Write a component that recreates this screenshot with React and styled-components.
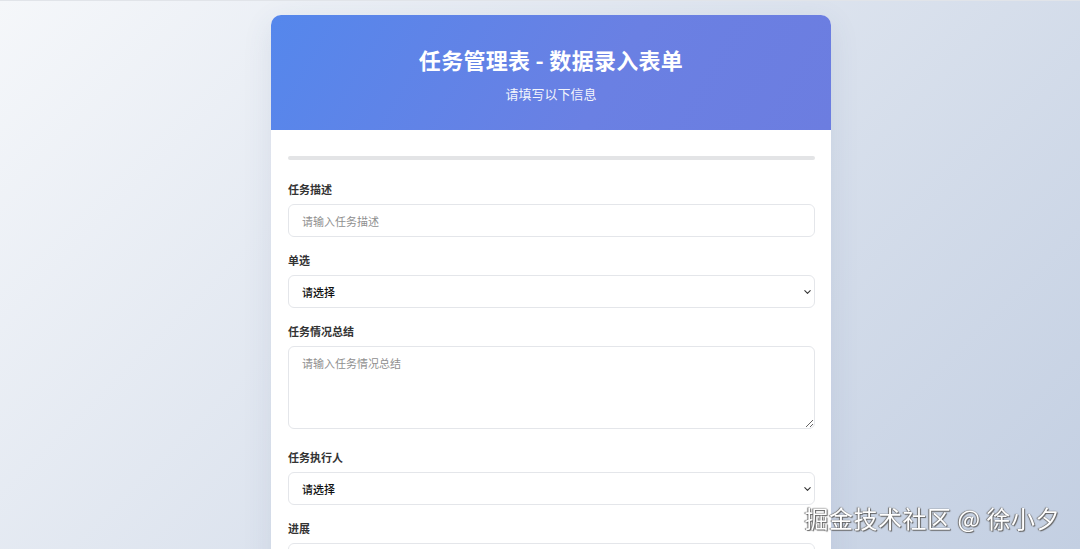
import React from "react";
import styled, { createGlobalStyle } from "styled-components";

const Global = createGlobalStyle`
  * { box-sizing: border-box; }
  html, body { margin: 0; padding: 0; }
  body {
    font-family: "Noto Sans CJK SC", "Noto Sans", sans-serif;
    background: linear-gradient(135deg, #f5f7fa 0%, #c3cfe2 100%);
    background-attachment: fixed;
    min-height: 100vh;
    border-top: 1px solid #e1e4e9;
  }
`;

const Page = styled.div`
  display: flex;
  justify-content: center;
  padding-top: 14px;
  padding-left: 22px;
`;

const Card = styled.div`
  width: 560px;
  background: #fff;
  border-radius: 10px;
  overflow: hidden;
  box-shadow: 0 8px 30px rgba(60, 80, 130, 0.10);
`;

const Header = styled.div`
  background: linear-gradient(120deg, #5587ec 0%, #6a80e3 60%, #6c7de0 100%);
  color: #fff;
  text-align: center;
  padding: 30px 20px 26px;
`;

const Title = styled.h1`
  margin: 0;
  font-size: 22px;
  line-height: 29px;
  font-weight: 700;
  letter-spacing: 0.3px;
`;

const Subtitle = styled.p`
  margin: 10px 0 0;
  font-size: 13px;
  line-height: 20px;
  opacity: 0.92;
`;

const Body = styled.div`
  padding: 26px 16px 24px 17px;
`;

const Progress = styled.div`
  height: 4px;
  border-radius: 2px;
  background: #e3e4e6;
  margin-bottom: 20px;
`;

const Group = styled.div`
  margin-bottom: 14px;
`;

const Label = styled.label`
  display: block;
  font-size: 11px;
  line-height: 18px;
  font-weight: 600;
  color: #333;
  margin-bottom: 6px;
`;

const Input = styled.input`
  display: block;
  width: 100%;
  height: 33px;
  border: 1px solid #e4e6ea;
  border-radius: 6px;
  padding: 0 13px;
  font-family: inherit;
  font-size: 11px;
  color: #333;
  background: #fff;
  outline: none;
  &::placeholder { color: #8f8f8f; }
`;

const TextArea = styled.textarea`
  width: 100%;
  height: 83px;
  border: 1px solid #e4e6ea;
  border-radius: 6px;
  padding: 7px 13px;
  font-family: inherit;
  font-size: 11px;
  line-height: 18px;
  color: #333;
  resize: vertical;
  outline: none;
  vertical-align: baseline;
  &::placeholder { color: #8f8f8f; }
`;

const SelectWrap = styled.div`
  position: relative;
`;

const Select = styled.select`
  display: block;
  width: 100%;
  height: 33px;
  border: 1px solid #e4e6ea;
  border-radius: 6px;
  padding: 0 13px;
  font-family: inherit;
  font-size: 11px;
  font-weight: 500;
  color: #111;
  background: #fff;
  appearance: none;
  -webkit-appearance: none;
  outline: none;
`;

const Chevron = styled.svg`
  position: absolute;
  right: 3px;
  top: 50%;
  width: 9px;
  height: 9px;
  transform: translateY(-50%);
  pointer-events: none;
`;

const Watermark = styled.div`
  position: fixed;
  right: 20px;
  bottom: 16px;
  font-size: 24px;
  line-height: 30px;
  color: #fff;
  font-family: "Noto Sans CJK SC", sans-serif;
  letter-spacing: 0.5px;
  text-shadow: 0 0 1px #555, 1px 1px 1px #666, -1px 0 1px #777;
`;

const ChevronIcon = () => (
  <Chevron viewBox="0 0 10 10">
    <path d="M2 3.5 L5 6.5 L8 3.5" fill="none" stroke="#333" strokeWidth="1.2" strokeLinecap="round" strokeLinejoin="round" />
  </Chevron>
);

const SelectField = ({ label }) => (
  <Group>
    <Label>{label}</Label>
    <SelectWrap>
      <Select defaultValue="">
        <option value="">请选择</option>
      </Select>
      <ChevronIcon />
    </SelectWrap>
  </Group>
);

export default function App() {
  return (
    <>
      <Global />
      <Page>
        <Card>
          <Header>
            <Title>任务管理表 - 数据录入表单</Title>
            <Subtitle>请填写以下信息</Subtitle>
          </Header>
          <Body>
            <Progress />
            <Group>
              <Label>任务描述</Label>
              <Input placeholder="请输入任务描述" />
            </Group>
            <SelectField label="单选" />
            <Group>
              <Label>任务情况总结</Label>
              <TextArea placeholder="请输入任务情况总结" />
            </Group>
            <SelectField label="任务执行人" />
            <Group>
              <Label>进展</Label>
              <Input placeholder="" />
            </Group>
            <SelectField label="优先级" />
          </Body>
        </Card>
      </Page>
      <Watermark>掘金技术社区 @ 徐小夕</Watermark>
    </>
  );
}
